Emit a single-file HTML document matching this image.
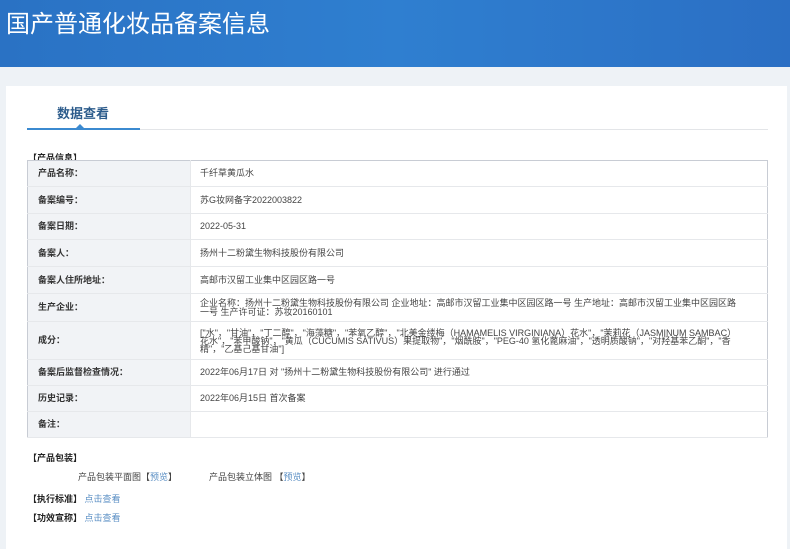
<!DOCTYPE html>
<html><head><meta charset="utf-8"><style>
*{margin:0;padding:0;box-sizing:border-box}
body{width:790px;height:549px;overflow:hidden;background:#eef2f6;font-family:"Liberation Sans","Noto Sans CJK SC",sans-serif;position:relative}
.hdr{position:absolute;left:0;top:0;width:790px;height:67px;background:linear-gradient(90deg,#2a72c4 0%,#2f7fd0 50%,#2b6fc4 100%)}
.hdr h1{position:absolute;left:6px;top:4px;font-size:24px;font-weight:normal;color:#fff}
.card{position:absolute;left:6px;top:86px;width:781px;height:463px;background:#fff}
.tab{position:absolute;left:57px;top:103px;font-size:13px;font-weight:bold;color:#2d5c8c}
.line{position:absolute;left:27px;top:129px;width:741px;height:1px;background:#e3e5e8}
.line2{position:absolute;left:27px;top:128px;width:113px;height:2px;background:#3b8ad0}
.tri{position:absolute;left:76px;top:124px;width:0;height:0;border-left:4px solid transparent;border-right:4px solid transparent;border-bottom:4px solid #3b8ad0}
.sec{position:absolute;font-size:9px;font-weight:bold;color:#222}
table{position:absolute;left:27px;top:160px;width:741px;border-collapse:collapse;border:1px solid #c8ccd4;font-size:9px;color:#444}
td{border-bottom:1px solid #e6e8eb;vertical-align:middle;line-height:9px}
td.l{width:163px;background:#f1f3f6;font-weight:bold;color:#333;padding-left:10px;border-right:1px solid #e6e8eb}
td.v{padding-left:9px;padding-right:30px}
.small{font-size:9px;color:#444;position:absolute}
a{color:#5b8fc4;text-decoration:none}
</style></head><body>
<div class="hdr"><h1>国产普通化妆品备案信息</h1></div>
<div class="card"></div>
<div class="tab">数据查看</div>
<div class="line"></div><div class="line2"></div><div class="tri"></div>
<div class="sec" style="left:28px;top:151px">【产品信息】</div>
<table>
<tr style="height:26px"><td class="l">产品名称：</td><td class="v">千纤草黄瓜水</td></tr>
<tr style="height:27px"><td class="l">备案编号：</td><td class="v">苏G妆网备字2022003822</td></tr>
<tr style="height:26px"><td class="l">备案日期：</td><td class="v">2022-05-31</td></tr>
<tr style="height:27px"><td class="l">备案人：</td><td class="v">扬州十二粉黛生物科技股份有限公司</td></tr>
<tr style="height:27px"><td class="l">备案人住所地址：</td><td class="v">高邮市汉留工业集中区园区路一号</td></tr>
<tr style="height:28px"><td class="l">生产企业：</td><td class="v">企业名称：扬州十二粉黛生物科技股份有限公司 企业地址：高邮市汉留工业集中区园区路一号 生产地址：高邮市汉留工业集中区园区路一号 生产许可证：苏妆20160101</td></tr>
<tr style="height:38px"><td class="l">成分：</td><td class="v" style="line-height:8px">["水"，"甘油"，"丁二醇"，"海藻糖"，"苯氧乙醇"，"北美金缕梅（HAMAMELIS VIRGINIANA）花水"，"茉莉花（JASMINUM SAMBAC）花水"，"苯甲酸钠"，"黄瓜（CUCUMIS SATIVUS）果提取物"，"烟酰胺"，"PEG-40 氢化蓖麻油"，"透明质酸钠"，"对羟基苯乙酮"，"香精"，"乙基己基甘油"]</td></tr>
<tr style="height:26px"><td class="l">备案后监督检查情况：</td><td class="v">2022年06月17日 对 "扬州十二粉黛生物科技股份有限公司" 进行通过</td></tr>
<tr style="height:26px"><td class="l">历史记录：</td><td class="v">2022年06月15日 首次备案</td></tr>
<tr style="height:26px"><td class="l">备注：</td><td class="v"></td></tr>
</table>
<div class="sec" style="left:28px;top:451px">【产品包装】</div>
<div class="small" style="left:78px;top:470px">产品包装平面图【<a>预览</a>】</div>
<div class="small" style="left:209px;top:470px">产品包装立体图 【<a>预览</a>】</div>
<div class="sec" style="left:28px;top:492px">【执行标准】 <a style="font-weight:normal">点击查看</a></div>
<div class="sec" style="left:28px;top:511px">【功效宣称】 <a style="font-weight:normal">点击查看</a></div>
</body></html>
